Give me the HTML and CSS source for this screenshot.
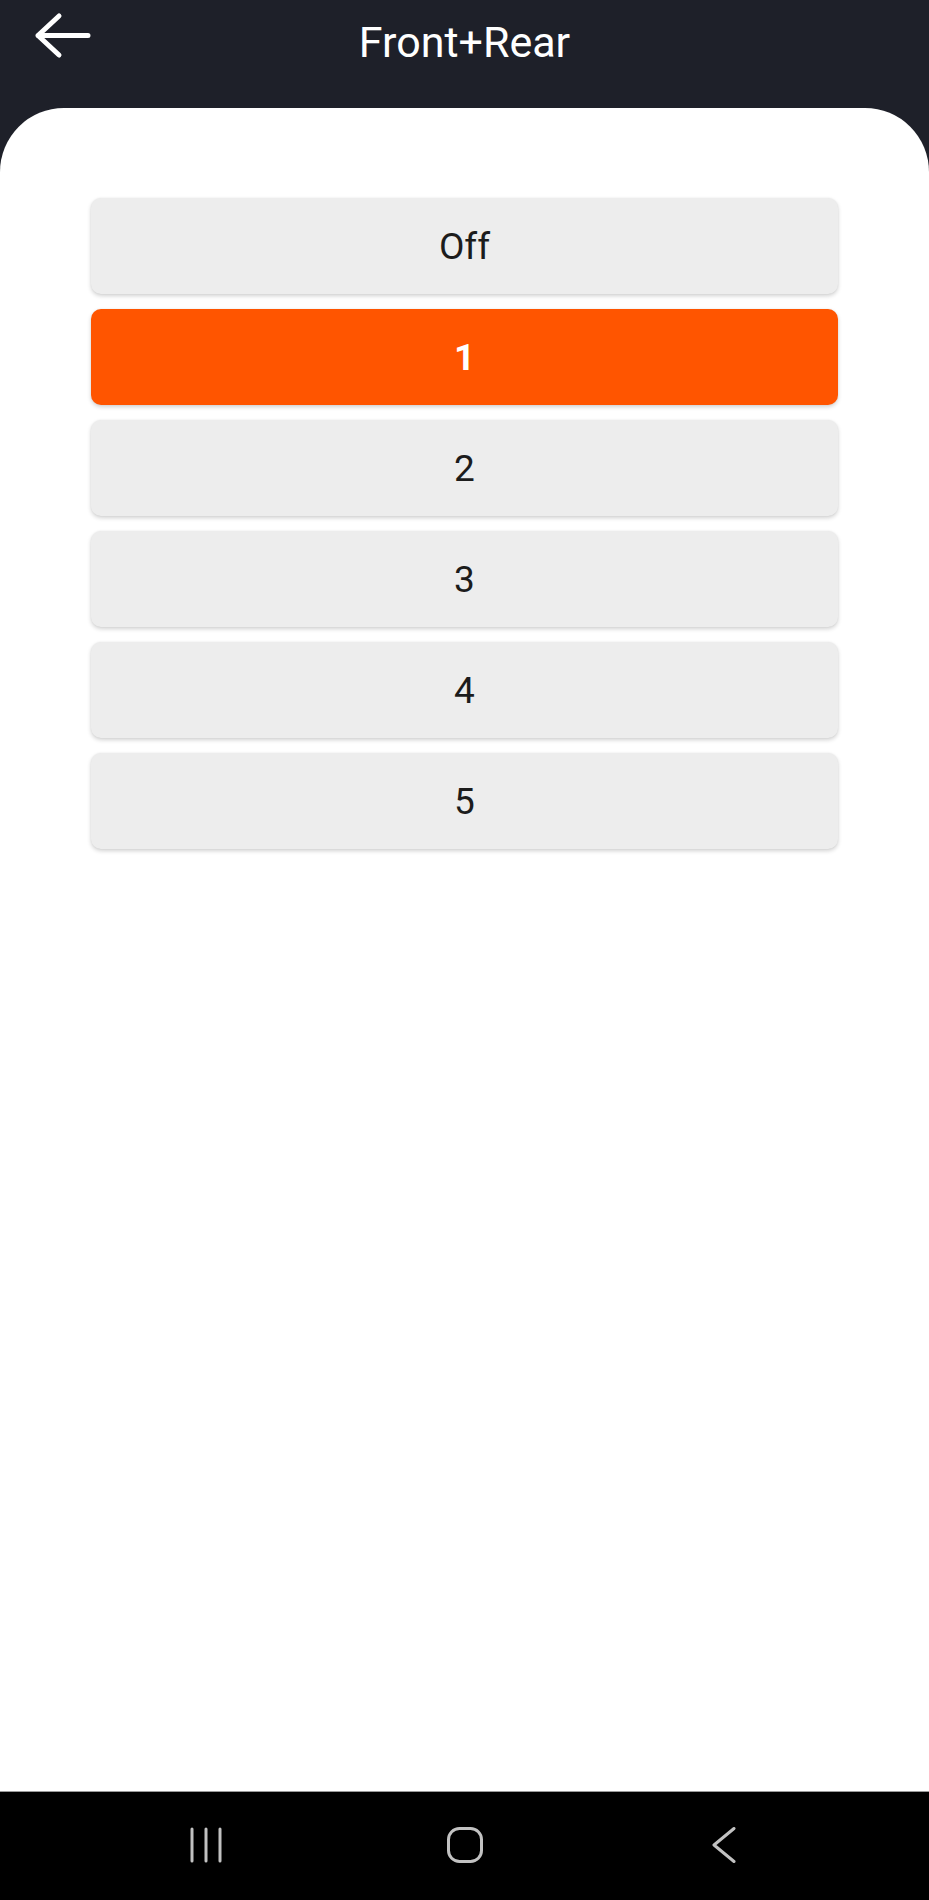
FILE: index.html
```html
<!DOCTYPE html>
<html lang="en">
<head>
<meta charset="utf-8">
<title>Front+Rear</title>
<link rel="stylesheet" href="styles.css">
</head>
<body>
<div class="screen">
  <header class="topbar">
    <button class="back" aria-label="Back">
      <svg width="58" height="48" viewBox="0 0 58 48">
        <path d="M54 23.5 H4 M25 4 L4 23.5 L25 43" fill="none" stroke="#fff" stroke-width="5" stroke-linecap="round" stroke-linejoin="round"/>
      </svg>
    </button>
    <h1 class="title">Front+Rear</h1>
    <span></span>
  </header>
  <main class="panel">
    <div class="options">
      <div class="option">Off</div>
      <div class="option active">1</div>
      <div class="option">2</div>
      <div class="option">3</div>
      <div class="option">4</div>
      <div class="option">5</div>
    </div>
  </main>
  <nav class="navbar">
    <span class="navicon">
      <svg width="80" height="36" viewBox="0 0 80 36">
        <path d="M26 2 V34 M40 2 V34 M54 2 V34" stroke="#c2c2c2" stroke-width="3" stroke-linecap="round" fill="none"/>
      </svg>
    </span>
    <span class="navicon">
      <svg width="80" height="36" viewBox="0 0 80 36">
        <rect x="23.5" y="1.5" width="33" height="33" rx="11" fill="none" stroke="#c2c2c2" stroke-width="3"/>
      </svg>
    </span>
    <span class="navicon">
      <svg width="80" height="36" viewBox="0 0 80 36">
        <path d="M50 1.5 L30 18 L50 34.5" fill="none" stroke="#c2c2c2" stroke-width="3" stroke-linecap="round" stroke-linejoin="round"/>
      </svg>
    </span>
  </nav>
</div>
</body>
</html>
```

FILE: styles.css
```css
* { box-sizing: border-box; }

html, body {
  margin: 0;
  padding: 0;
}

body {
  width: 929px;
  height: 1900px;
  background: #1e2029;
  font-family: Roboto, "Noto Sans", "Liberation Sans", sans-serif;
}

.screen {
  display: flex;
  flex-direction: column;
  height: 1900px;
}

.topbar {
  height: 108px;
  flex: 0 0 108px;
  display: grid;
  grid-template-columns: 1fr auto 1fr;
  align-items: start;
  background: #1e2029;
}

.back {
  justify-self: start;
  margin: 12px 0 0 34px;
  padding: 0;
  border: 0;
  background: none;
  display: block;
  line-height: 0;
}

.title {
  margin: 0;
  padding-top: 21px;
  font-size: 43px;
  line-height: 43px;
  font-weight: 400;
  color: #ffffff;
}

.panel {
  flex: 1;
  background: #ffffff;
  border-radius: 64px 64px 0 0;
  padding: 90px 91px 0;
}

.options {
  display: flex;
  flex-direction: column;
  gap: 15px;
}

.option {
  height: 96px;
  display: flex;
  align-items: center;
  justify-content: center;
  background: #ededed;
  border-radius: 10px;
  box-shadow: 0 2px 4px rgba(0, 0, 0, 0.18), 0 0 2px rgba(0, 0, 0, 0.06);
  font-size: 37px;
  color: #1c1c1c;
}

.option.active {
  background: #ff5500;
  color: #ffffff;
  font-weight: 700;
}

.navbar {
  flex: 0 0 109px;
  height: 109px;
  background: #000000;
  border-top: 1px solid #9a9a9a;
  display: flex;
  justify-content: center;
  align-items: center;
  gap: 179px;
  padding-bottom: 2px;
}

.navicon {
  width: 80px;
  height: 36px;
  display: block;
  line-height: 0;
}
```
